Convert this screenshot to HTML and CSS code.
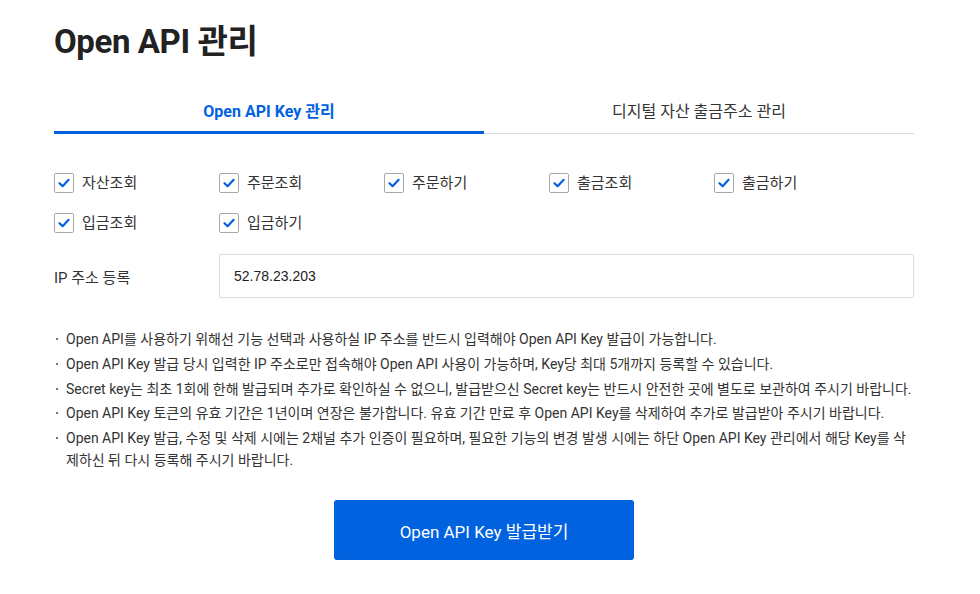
FILE: index.html
```html
<!DOCTYPE html>
<html lang="ko">
<head>
<meta charset="utf-8">
<title>Open API 관리</title>
<link rel="stylesheet" href="styles.css">
</head>
<body>
<main class="page">
  <h1 class="title">Open API 관리</h1>
  <nav class="tabs">
    <a class="tab active">Open API Key 관리</a>
    <a class="tab">디지털 자산 출금주소 관리</a>
  </nav>
  <div class="perms">
    <label class="check"><span class="box"><svg viewBox="0 0 20 20" width="20" height="20"><path d="M5.5 10.2 L8.6 13.2 L14.6 6.8" fill="none" stroke="#0062df" stroke-width="2.2" stroke-linecap="round" stroke-linejoin="round"/></svg></span>자산조회</label>
    <label class="check"><span class="box"><svg viewBox="0 0 20 20" width="20" height="20"><path d="M5.5 10.2 L8.6 13.2 L14.6 6.8" fill="none" stroke="#0062df" stroke-width="2.2" stroke-linecap="round" stroke-linejoin="round"/></svg></span>주문조회</label>
    <label class="check"><span class="box"><svg viewBox="0 0 20 20" width="20" height="20"><path d="M5.5 10.2 L8.6 13.2 L14.6 6.8" fill="none" stroke="#0062df" stroke-width="2.2" stroke-linecap="round" stroke-linejoin="round"/></svg></span>주문하기</label>
    <label class="check"><span class="box"><svg viewBox="0 0 20 20" width="20" height="20"><path d="M5.5 10.2 L8.6 13.2 L14.6 6.8" fill="none" stroke="#0062df" stroke-width="2.2" stroke-linecap="round" stroke-linejoin="round"/></svg></span>출금조회</label>
    <label class="check"><span class="box"><svg viewBox="0 0 20 20" width="20" height="20"><path d="M5.5 10.2 L8.6 13.2 L14.6 6.8" fill="none" stroke="#0062df" stroke-width="2.2" stroke-linecap="round" stroke-linejoin="round"/></svg></span>출금하기</label>
    <label class="check"><span class="box"><svg viewBox="0 0 20 20" width="20" height="20"><path d="M5.5 10.2 L8.6 13.2 L14.6 6.8" fill="none" stroke="#0062df" stroke-width="2.2" stroke-linecap="round" stroke-linejoin="round"/></svg></span>입금조회</label>
    <label class="check"><span class="box"><svg viewBox="0 0 20 20" width="20" height="20"><path d="M5.5 10.2 L8.6 13.2 L14.6 6.8" fill="none" stroke="#0062df" stroke-width="2.2" stroke-linecap="round" stroke-linejoin="round"/></svg></span>입금하기</label>
  </div>
  <div class="ip-row">
    <span class="ip-label">IP 주소 등록</span>
    <div class="ip-input">52.78.23.203</div>
  </div>
  <ul class="notes">
    <li>Open API를 사용하기 위해선 기능 선택과 사용하실 IP 주소를 반드시 입력해야 Open API Key 발급이 가능합니다.</li>
    <li>Open API Key 발급 당시 입력한 IP 주소로만 접속해야 Open API 사용이 가능하며, Key당 최대 5개까지 등록할 수 있습니다.</li>
    <li>Secret key는 최초 1회에 한해 발급되며 추가로 확인하실 수 없으니, 발급받으신 Secret key는 반드시 안전한 곳에 별도로 보관하여 주시기 바랍니다.</li>
    <li>Open API Key 토큰의 유효 기간은 1년이며 연장은 불가합니다. 유효 기간 만료 후 Open API Key를 삭제하여 추가로 발급받아 주시기 바랍니다.</li>
    <li>Open API Key 발급, 수정 및 삭제 시에는 2채널 추가 인증이 필요하며, 필요한 기능의 변경 발생 시에는 하단 Open API Key 관리에서 해당 Key를 삭제하신 뒤 다시 등록해 주시기 바랍니다.</li>
  </ul>
  <div class="actions">
    <button class="issue">Open API Key 발급받기</button>
  </div>
</main>
</body>
</html>
```
FILE: styles.css
```css
* { box-sizing: border-box; }
html, body { margin: 0; padding: 0; background: #fff; }
body {
  font-family: Roboto, "Noto Sans CJK KR", sans-serif;
  color: #333;
}
.page {
  width: 860px;
  margin-left: 54px;
  padding-top: 22px;
}
.title {
  margin: 0;
  font-size: 33px;
  line-height: 40px;
  font-weight: 700;
  color: #222;
  letter-spacing: -0.4px;
}
.tabs {
  display: flex;
  margin-top: 28px;
  box-shadow: inset 0 -1px 0 #dcdcdc;
}
.tab {
  flex: 1;
  text-align: center;
  font-size: 16px;
  line-height: 24px;
  padding: 10px 0 7px;
  border-bottom: 3px solid transparent;
  color: #333;
}
.tab.active {
  color: #0062df;
  font-weight: 700;
  border-bottom-color: #0062df;
}
.perms {
  display: grid;
  grid-template-columns: repeat(5, 165px);
  row-gap: 20px;
  margin-top: 39px;
}
.check {
  display: flex;
  align-items: center;
  height: 20px;
  font-size: 15px;
  line-height: 18px;
  color: #333;
}
.box {
  width: 20px;
  height: 20px;
  border: 1px solid #a8a8a8;
  border-radius: 2px;
  margin-right: 8px;
  position: relative;
}
.box svg { position: absolute; left: -1px; top: -1px; }
.ip-row {
  display: flex;
  align-items: center;
  margin-top: 21px;
}
.ip-label {
  width: 165px;
  font-size: 15px;
  color: #333;
}
.ip-input {
  flex: 1;
  height: 44px;
  border: 1px solid #dcdcdc;
  border-radius: 2px;
  padding: 0 14px;
  display: flex;
  align-items: center;
  font-family: "Liberation Sans", Arial, sans-serif;
  font-size: 14px;
  color: #222;
}
.notes {
  list-style: none;
  margin: 30px 0 0;
  padding: 0;
}
.notes li {
  position: relative;
  padding-left: 12px;
  font-size: 14px;
  line-height: 22px;
  color: #333;
  margin-bottom: 2.75px;
}
.notes li::before {
  content: "";
  position: absolute;
  left: 2px;
  top: 10px;
  width: 2px;
  height: 2px;
  background: #777;
}
.actions {
  display: flex;
  justify-content: center;
  margin-top: 29px;
}
.issue {
  width: 300px;
  height: 60px;
  border: 0;
  border-radius: 3px;
  background: #0062df;
  color: #fff;
  font-family: Roboto, "Noto Sans CJK KR", sans-serif;
  font-size: 17px;
}
```
